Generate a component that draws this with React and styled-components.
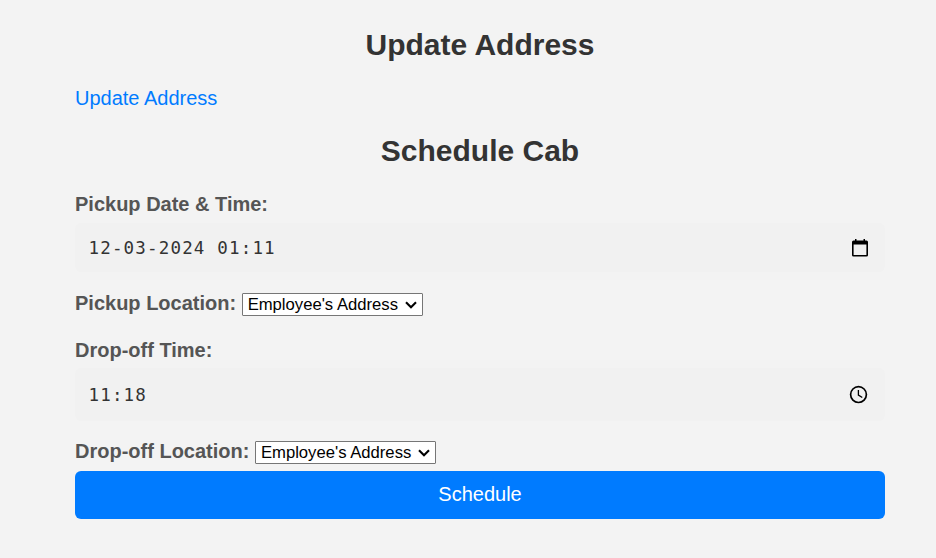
import React from "react";
import styled, { createGlobalStyle } from "styled-components";

const GlobalStyle = createGlobalStyle`
  * { box-sizing: border-box; }
  body {
    margin: 0;
    background: #f3f3f3;
    font-family: "Liberation Sans", Arial, sans-serif;
    font-size: 20px;
  }
`;

const Page = styled.main`
  display: flex;
  flex-direction: column;
  width: 810px;
  height: 558px;
  margin-left: 75px;
  padding-top: 28px;
`;

const Heading = styled.h2`
  margin: 0;
  height: 34px;
  line-height: 34px;
  font-size: 30px;
  font-weight: 700;
  color: #333;
  text-align: center;
`;

const AddressLink = styled.a`
  align-self: flex-start;
  margin: 24px 0 26px;
  height: 22px;
  line-height: 24px;
  color: #007bff;
  text-decoration: none;
`;

const Form = styled.form`
  display: flex;
  flex-direction: column;
  margin-top: 24px;
`;

const Label = styled.label`
  height: 24px;
  line-height: 24px;
  font-weight: 700;
  color: #555;
  white-space: nowrap;
`;

const Field = styled.div`
  display: flex;
  align-items: center;
  justify-content: space-between;
  height: ${(p) => p.$height}px;
  margin-top: ${(p) => p.$gap}px;
  padding: 0 16px 0 13.5px;
  border-radius: 6px;
  background: #f1f1f1;
  color: #333;
`;

const Value = styled.span`
  font-family: "DejaVu Sans Mono", monospace;
  font-size: 17.5px;
  letter-spacing: 1.17px;
  line-height: 22px;
  white-space: pre;
`;

const Icon = styled.svg`
  display: block;
  flex: none;
`;

const LocationRow = styled.div`
  display: flex;
  align-items: flex-start;
  gap: 6px;
  height: 24px;
  margin-top: ${(p) => p.$gap}px;
`;

const TimeLabel = styled(Label)`
  margin-top: 23px;
`;

const SelectBox = styled.div`
  display: grid;
  width: 181px;
  height: 23px;
  margin-top: 2px;
  align-items: center;

  & > * { grid-area: 1 / 1; }
  & > svg {
    justify-self: end;
    margin-right: 5px;
    pointer-events: none;
  }
`;

const Select = styled.select`
  appearance: none;
  width: 100%;
  height: 100%;
  margin: 0;
  padding: 0 0 0 4.5px;
  border: 1px solid #767676;
  border-radius: 1px;
  background: #fff;
  color: #000;
  font: 16.67px/21px "Liberation Sans", Arial, sans-serif;
`;

const SubmitButton = styled.button`
  height: 48px;
  margin-top: 8px;
  padding: 0 0 2px;
  border: 0;
  border-radius: 6px;
  background: #007bff;
  color: #fff;
  font: 20px "Liberation Sans", Arial, sans-serif;
`;

function CalendarIcon() {
  return (
    <Icon width="18" height="20" viewBox="0 0 18 20">
      <path
        fill="#000"
        fillRule="evenodd"
        d="M4 1h1.5v1.5h7V1H14v1.5h1.5Q17 2.5 17 4v13.2q0 1.3-1.5 1.3h-13Q1 18.5 1 17.2V4q0-1.5 1.5-1.5H4zM2.6 6.6v10.4h12.8V6.6z"
      />
    </Icon>
  );
}

function ClockIcon() {
  return (
    <Icon width="20" height="20" viewBox="0 0 20 20" fill="none" stroke="#000">
      <circle cx="9.5" cy="9.6" r="7.9" strokeWidth="1.7" />
      <path d="M9.4 5v5.1l3.9 2.4" strokeWidth="1.3" />
    </Icon>
  );
}

function LocationSelect({ id }) {
  return (
    <SelectBox>
      <Select id={id}>
        <option>Employee's Address</option>
      </Select>
      <Icon width="14" height="10" viewBox="0 0 14 10">
        <path d="m2 2.3 5 5 5-5" fill="none" stroke="#000" strokeWidth="2.1" />
      </Icon>
    </SelectBox>
  );
}

export default function App() {
  return (
    <>
      <GlobalStyle />
      <Page>
        <Heading>Update Address</Heading>
        <AddressLink href="#address">Update Address</AddressLink>
        <Heading>Schedule Cab</Heading>
        <Form>
          <Label>Pickup Date &amp; Time:</Label>
          <Field $height={49} $gap={7}>
            <Value>12-03-2024 01:11</Value>
            <CalendarIcon />
          </Field>
          <LocationRow $gap={19}>
            <Label htmlFor="pickup">Pickup Location:</Label>
            <LocationSelect id="pickup" />
          </LocationRow>
          <TimeLabel>Drop-off Time:</TimeLabel>
          <Field $height={53} $gap={6}>
            <Value>11:18</Value>
            <ClockIcon />
          </Field>
          <LocationRow $gap={18}>
            <Label htmlFor="dropoff">Drop-off Location:</Label>
            <LocationSelect id="dropoff" />
          </LocationRow>
          <SubmitButton type="button">Schedule</SubmitButton>
        </Form>
      </Page>
    </>
  );
}
